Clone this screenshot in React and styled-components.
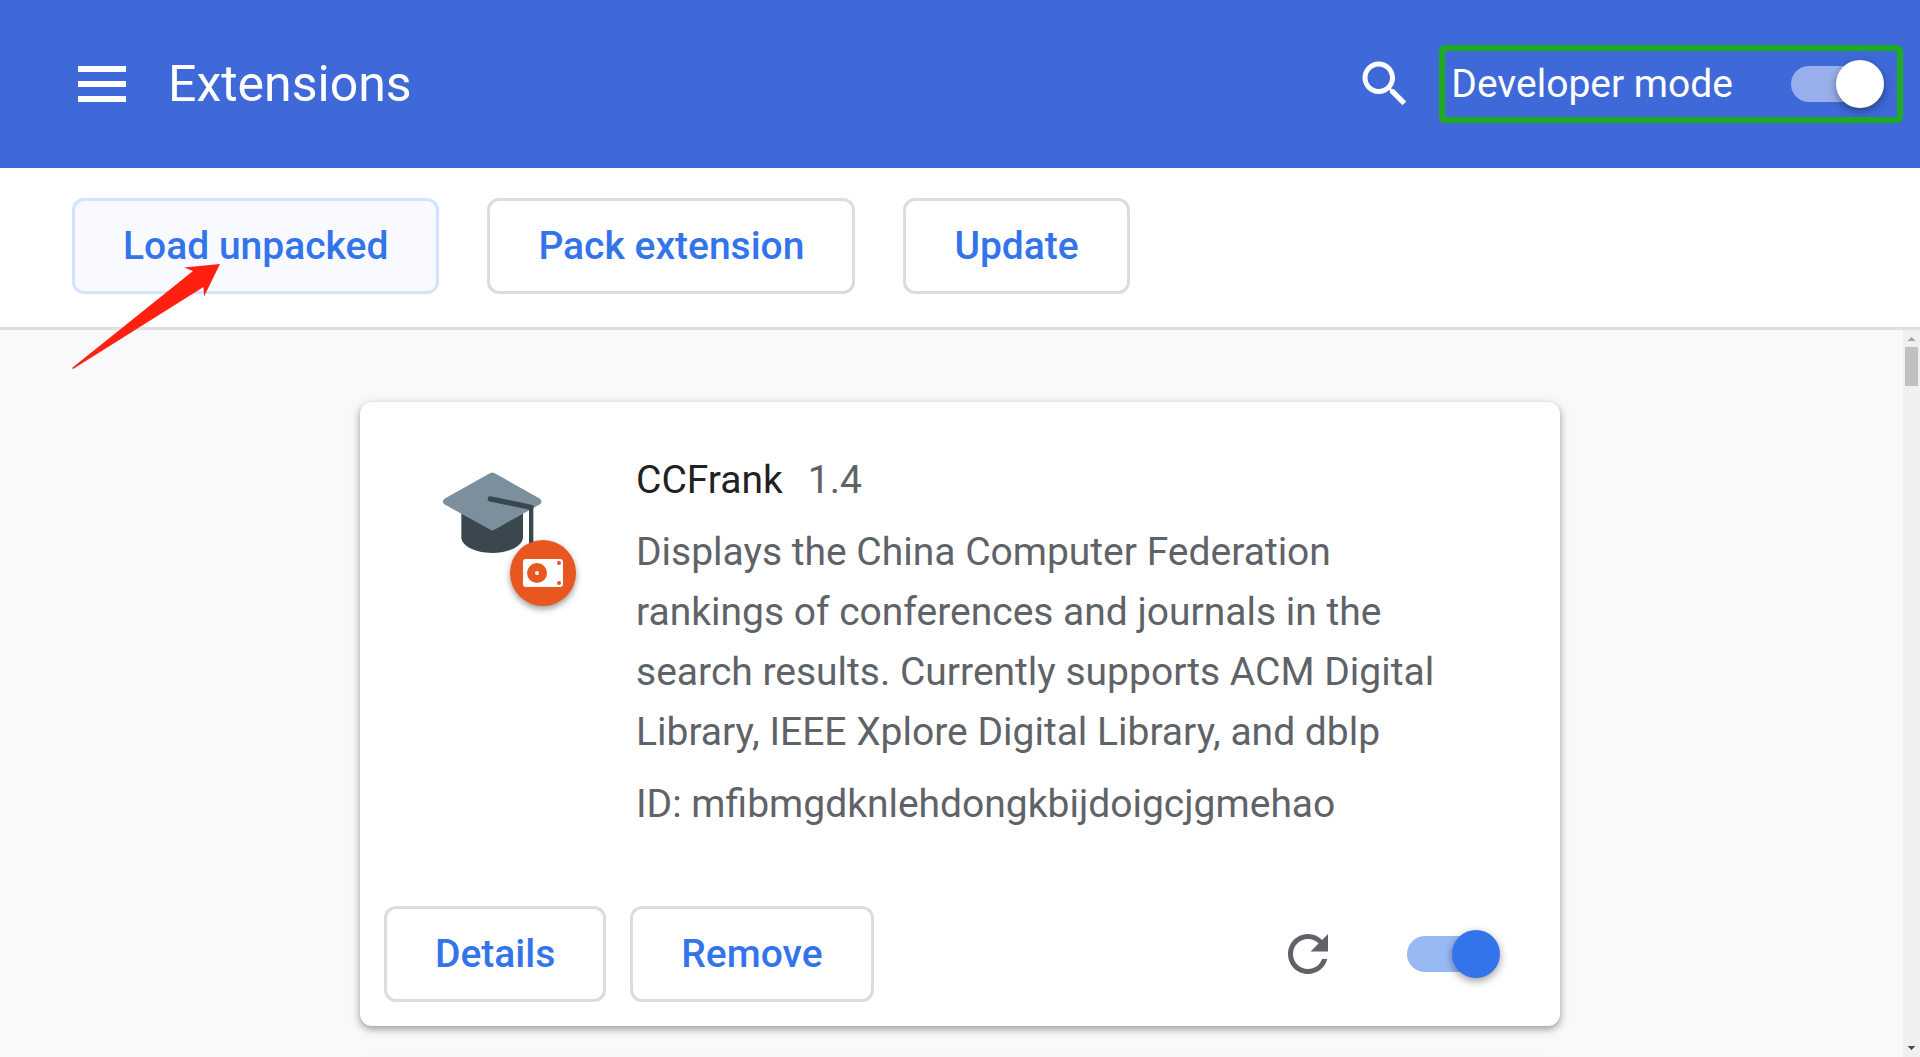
import React from "react";
import styled, { createGlobalStyle, css } from "styled-components";

const color = {
  header: "#3f69d9",
  accent: "#3374eb",
  accentSoft: "#99b9f5",
  text: "#202124",
  muted: "#5f6368",
  line: "#dadce0",
  page: "#f8f9fb",
  highlight: "#1fab1f",
  arrow: "#ff2012",
};

const GlobalStyle = createGlobalStyle`
  *, *::before, *::after { box-sizing: border-box; }
  body {
    margin: 0;
    background: ${color.page};
    color: ${color.muted};
    font: 400 39px/60px Roboto, "Liberation Sans", sans-serif;
  }
  h1, h2, p { margin: 0; font: inherit; }
`;

const Page = styled.div`
  display: flex;
  flex-direction: column;
  height: 100vh;
  overflow: hidden;
`;

const Header = styled.header`
  display: flex;
  align-items: center;
  flex: none;
  height: 168px;
  padding: 0 17px 0 78px;
  background: ${color.header};
  color: #fff;
`;

const IconButton = styled.button`
  display: flex;
  flex: none;
  padding: 0;
  border: 0;
  background: none;
  color: inherit;
  cursor: pointer;
`;

const Title = styled.h1`
  flex: 1;
  padding-left: 42px;
  font-size: 50px;
`;

const DeveloperMode = styled.label`
  display: flex;
  align-items: center;
  gap: 58px;
  height: 78px;
  margin-left: 24px;
  padding: 0 13px 0 6px;
  border: 6px solid ${color.highlight};
  border-radius: 6px;
`;

const Toggle = styled.input.attrs({ type: "checkbox" })`
  appearance: none;
  display: flex;
  align-items: center;
  flex: none;
  width: 93px;
  height: 48px;
  margin: 0;
  cursor: pointer;

  &::before {
    content: "";
    width: 84px;
    height: 36px;
    border-radius: 18px;
    background: ${(p) => (p.$onHeader ? "rgba(255, 255, 255, 0.47)" : color.accentSoft)};
  }

  &::after {
    content: "";
    width: 48px;
    height: 48px;
    margin-left: -84px;
    border-radius: 50%;
    background: ${(p) => (p.$onHeader ? "#fff" : color.accent)};
    box-shadow: 0 3px 9px rgba(0, 0, 0, 0.4);
  }

  &:checked::after {
    margin-left: -39px;
  }
`;

const Toolbar = styled.div`
  display: flex;
  flex: none;
  gap: 48px;
  padding: 30px 72px 33px;
  border-bottom: 3px solid #dfdfdf;
  background: #fff;
`;

const Anchor = styled.div`
  position: relative;
`;

const Button = styled.button`
  height: 96px;
  padding: 0 48px;
  border: 3px solid ${color.line};
  border-radius: 12px;
  background: #fff;
  color: ${color.accent};
  font: 500 39px/60px Roboto, "Liberation Sans", sans-serif;
  white-space: nowrap;
  cursor: pointer;
  ${(p) =>
    p.$active &&
    css`
      border-color: #d2e3fc;
      background: #f8faff;
    `}
`;

const Pointer = styled.svg`
  position: absolute;
  left: 0;
  top: 64px;
  z-index: 2;
  pointer-events: none;
`;

const Content = styled.main`
  position: relative;
  display: flex;
  flex-direction: column;
  align-items: center;
  flex: 1;
  gap: 36px;
  min-height: 0;
  padding-top: 72px;
  overflow: hidden;
`;

const Card = styled.article`
  display: flex;
  flex-direction: column;
  flex: none;
  gap: 72px;
  width: 1200px;
  max-width: 100%;
  min-height: 624px;
  padding: 48px 60px 24px 24px;
  border-radius: 12px;
  background: #fff;
  box-shadow: 0 3px 6px rgba(0, 0, 0, 0.26), 0 3px 12px rgba(0, 0, 0, 0.16);
`;

const Summary = styled.div`
  display: flex;
  gap: 90px;
  padding-left: 54px;
`;

const IconBox = styled.div`
  position: relative;
  flex: none;
  width: 108px;
  height: 108px;
  margin-top: 10px;
`;

const Badge = styled.span`
  position: absolute;
  left: 72px;
  top: 80px;
  display: flex;
  align-items: center;
  justify-content: center;
  width: 66px;
  height: 66px;
  border-radius: 50%;
  background: #e8571f;
  box-shadow: 0 3px 6px rgba(0, 0, 0, 0.4);
`;

const Details = styled.div`
  display: flex;
  flex-direction: column;
  gap: 12px;
`;

const NameRow = styled.div`
  display: flex;
  gap: 25px;
`;

const Name = styled.h2`
  color: ${color.text};
`;

const Description = styled.p`
  max-width: 820px;
`;

const Actions = styled.div`
  display: flex;
  align-items: center;
  gap: 24px;
`;

const Controls = styled.div`
  display: flex;
  align-items: center;
  gap: 69px;
  margin-left: auto;
  color: ${color.muted};
`;

const ScrollTrack = styled.div`
  position: absolute;
  right: 0;
  top: 0;
  bottom: 0;
  display: flex;
  flex-direction: column;
  align-items: center;
  width: 17px;
  padding: 7px 0;
  background: #f0f0f0;
`;

const ScrollThumb = styled.div`
  width: 13px;
  height: 39px;
  margin: 6px 0 auto;
  background: #c1c1c1;
`;

const MenuIcon = () => (
  <svg width="48" height="36" viewBox="0 0 48 36" fill="currentColor" aria-hidden="true">
    <path d="M0 0h48v6H0zM0 15h48v6H0zM0 30h48v6H0z" />
  </svg>
);

const SearchIcon = () => (
  <svg width="60" height="60" viewBox="0 0 24 24" fill="currentColor" aria-hidden="true">
    <path d="M15.5 14h-.79l-.28-.27C15.41 12.59 16 11.11 16 9.5 16 5.91 13.09 3 9.5 3S3 5.91 3 9.5 5.91 16 9.5 16c1.61 0 3.09-.59 4.23-1.57l.27.28v.79l5 4.99L20.49 19l-4.99-5zm-6 0C7.01 14 5 11.99 5 9.5S7.01 5 9.5 5 14 7.01 14 9.5 11.99 14 9.5 14z" />
  </svg>
);

const ReloadIcon = () => (
  <svg width="60" height="60" viewBox="0 0 24 24" fill="currentColor" aria-hidden="true">
    <path d="M17.65 6.35C16.2 4.9 14.21 4 12 4c-4.42 0-7.99 3.58-7.99 8s3.57 8 7.99 8c3.73 0 6.84-2.55 7.73-6h-2.08c-.82 2.33-3.04 4-5.65 4-3.31 0-6-2.69-6-6s2.69-6 6-6c1.66 0 3.14.69 4.22 1.78L13 11h7V4l-2.35 2.35z" />
  </svg>
);

const CapIcon = () => (
  <svg width="108" height="108" viewBox="54 60 324 324" aria-hidden="true">
    <path d="M124 210h185v82c0 26-42 47-92.500 47S124 318 124 292z" fill="#3a474e" />
    <path
      d="M211 99q6-3 12 0l137 77q9 9 0 17l-137 76q-6 4-12 0L73 193q-9-8 0-17z"
      fill="#7b909c"
    />
    <path d="M327 205h13v120h-13z" fill="#3a474e" />
    <path d="M211 176.500L333 202" fill="none" stroke="#3a474e" strokeWidth="16" strokeLinecap="round" />
  </svg>
);

const DriveIcon = () => (
  <svg width="40" height="28" viewBox="0 0 40 28" aria-hidden="true">
    <rect width="40" height="28" rx="3" fill="#fff" />
    <circle cx="14" cy="14" r="10" fill="#e8571f" />
    <circle cx="14" cy="14" r="2" fill="#fff" />
    <circle cx="36" cy="4" r="2" fill="#e8571f" />
    <circle cx="36" cy="24" r="2" fill="#e8571f" />
  </svg>
);

export default function App() {
  return (
    <Page>
      <GlobalStyle />
      <Header>
        <IconButton aria-label="Main menu">
          <MenuIcon />
        </IconButton>
        <Title>Extensions</Title>
        <IconButton aria-label="Search extensions">
          <SearchIcon />
        </IconButton>
        <DeveloperMode htmlFor="developer-mode">
          Developer mode
          <Toggle id="developer-mode" $onHeader defaultChecked />
        </DeveloperMode>
      </Header>

      <Toolbar>
        <Anchor>
          <Button $active>Load unpacked</Button>
          <Pointer width="152" height="110" viewBox="0 0 152 110" aria-hidden="true">
            <path d="M148 2L112 5.500L121 9L0 106L1 107L131.500 25L132 34.500z" fill={color.arrow} />
          </Pointer>
        </Anchor>
        <Button>Pack extension</Button>
        <Button>Update</Button>
      </Toolbar>

      <Content>
        <Card>
          <Summary>
            <IconBox>
              <CapIcon />
              <Badge>
                <DriveIcon />
              </Badge>
            </IconBox>
            <Details>
              <NameRow>
                <Name>CCFrank</Name>
                <span>1.4</span>
              </NameRow>
              <Description>
                Displays the China Computer Federation rankings of conferences and journals in the
                search results. Currently supports ACM Digital Library, IEEE Xplore Digital Library,
                and dblp
              </Description>
              <p>ID: mfibmgdknlehdongkbijdoigcjgmehao</p>
            </Details>
          </Summary>
          <Actions>
            <Button>Details</Button>
            <Button>Remove</Button>
            <Controls>
              <IconButton aria-label="Reload">
                <ReloadIcon />
              </IconButton>
              <Toggle aria-label="Enable CCFrank" defaultChecked />
            </Controls>
          </Actions>
        </Card>
        <Card />
        <ScrollTrack aria-hidden="true">
          <svg width="7" height="4" viewBox="0 0 7 4" shapeRendering="crispEdges">
            <path d="M3 0h1v1h1v1h1v1h1v1H0V3h1V2h1V1h1z" fill="#a3a3a3" />
          </svg>
          <ScrollThumb />
          <svg width="7" height="4" viewBox="0 0 7 4" shapeRendering="crispEdges">
            <path d="M0 0h7v1H6v1H5v1H4v1H3V3H2V2H1V1H0z" fill="#505050" />
          </svg>
        </ScrollTrack>
      </Content>
    </Page>
  );
}
